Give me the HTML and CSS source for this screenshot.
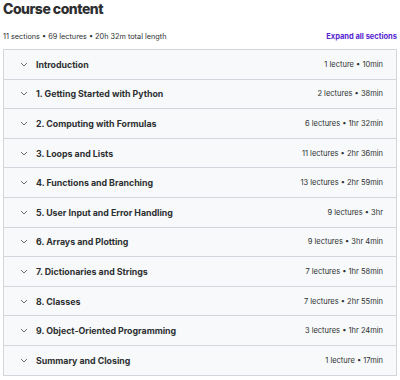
FILE: index.html
```html
<!DOCTYPE html>
<html lang="en">
<head>
    <meta charset="UTF-8">
    <title>Course content</title>
    <meta name="viewport" content="width=device-width, initial-scale=1.0">
    <link rel="stylesheet" href="styles.css">
</head>
<body>
    <h2 class="title">Course content</h2>

    <div class="summary">
        <span>11 sections • 69 lectures • 20h 32m total length</span>
        <button class="expand">Expand all sections</button>
    </div>

    <div class="sections">
        <div class="section">
            <span class="chevron"><svg width="8" height="5" viewBox="0 0 8 5"><path d="M1 1l3 3 3-3" fill="none" stroke="#6a6f73" stroke-width="1"/></svg></span>
            <span class="name">Introduction</span>
            <span class="meta">1 lecture • 10min</span>
        </div>
        <div class="section">
            <span class="chevron"><svg width="8" height="5" viewBox="0 0 8 5"><path d="M1 1l3 3 3-3" fill="none" stroke="#6a6f73" stroke-width="1"/></svg></span>
            <span class="name">1. Getting Started with Python</span>
            <span class="meta">2 lectures • 38min</span>
        </div>
        <div class="section">
            <span class="chevron"><svg width="8" height="5" viewBox="0 0 8 5"><path d="M1 1l3 3 3-3" fill="none" stroke="#6a6f73" stroke-width="1"/></svg></span>
            <span class="name">2. Computing with Formulas</span>
            <span class="meta">6 lectures • 1hr 32min</span>
        </div>
        <div class="section">
            <span class="chevron"><svg width="8" height="5" viewBox="0 0 8 5"><path d="M1 1l3 3 3-3" fill="none" stroke="#6a6f73" stroke-width="1"/></svg></span>
            <span class="name">3. Loops and Lists</span>
            <span class="meta">11 lectures • 2hr 36min</span>
        </div>
        <div class="section">
            <span class="chevron"><svg width="8" height="5" viewBox="0 0 8 5"><path d="M1 1l3 3 3-3" fill="none" stroke="#6a6f73" stroke-width="1"/></svg></span>
            <span class="name">4. Functions and Branching</span>
            <span class="meta">13 lectures • 2hr 59min</span>
        </div>
        <div class="section">
            <span class="chevron"><svg width="8" height="5" viewBox="0 0 8 5"><path d="M1 1l3 3 3-3" fill="none" stroke="#6a6f73" stroke-width="1"/></svg></span>
            <span class="name">5. User Input and Error Handling</span>
            <span class="meta">9 lectures • 3hr</span>
        </div>
        <div class="section">
            <span class="chevron"><svg width="8" height="5" viewBox="0 0 8 5"><path d="M1 1l3 3 3-3" fill="none" stroke="#6a6f73" stroke-width="1"/></svg></span>
            <span class="name">6. Arrays and Plotting</span>
            <span class="meta">9 lectures • 3hr 4min</span>
        </div>
        <div class="section">
            <span class="chevron"><svg width="8" height="5" viewBox="0 0 8 5"><path d="M1 1l3 3 3-3" fill="none" stroke="#6a6f73" stroke-width="1"/></svg></span>
            <span class="name">7. Dictionaries and Strings</span>
            <span class="meta">7 lectures • 1hr 58min</span>
        </div>
        <div class="section">
            <span class="chevron"><svg width="8" height="5" viewBox="0 0 8 5"><path d="M1 1l3 3 3-3" fill="none" stroke="#6a6f73" stroke-width="1"/></svg></span>
            <span class="name">8. Classes</span>
            <span class="meta">7 lectures • 2hr 55min</span>
        </div>
        <div class="section">
            <span class="chevron"><svg width="8" height="5" viewBox="0 0 8 5"><path d="M1 1l3 3 3-3" fill="none" stroke="#6a6f73" stroke-width="1"/></svg></span>
            <span class="name">9. Object-Oriented Programming</span>
            <span class="meta">3 lectures • 1hr 24min</span>
        </div>
        <div class="section">
            <span class="chevron"><svg width="8" height="5" viewBox="0 0 8 5"><path d="M1 1l3 3 3-3" fill="none" stroke="#6a6f73" stroke-width="1"/></svg></span>
            <span class="name">Summary and Closing</span>
            <span class="meta">1 lecture • 17min</span>
        </div>
    </div>
</body>
</html>
```

FILE: styles.css
```css
body {
    margin: 0;
    padding: 0 3px;
    font-family: Inter, "Noto Sans", sans-serif;
    color: #2d2f31;
    background: #ffffff;
}
.title {
    margin: 0;
    font-size: 14px;
    font-weight: 800;
    letter-spacing: -0.5px;
    line-height: 17px;
}
.summary {
    display: flex;
    justify-content: space-between;
    align-items: center;
    margin-top: 12px;
    height: 14px;
    font-size: 7.3px;
}
.expand {
    border: none;
    background: none;
    padding: 0;
    font-family: inherit;
    font-size: 7.5px;
    font-weight: 700;
    color: #5624d0;
}
.sections {
    margin-top: 6px;
    border: 1px solid #d1d7dc;
}
.section {
    display: flex;
    align-items: center;
    height: 28.6px;
    padding: 0 13px 0 16px;
    background: #f7f9fa;
    border-top: 1px solid #d1d7dc;
}
.section:first-child {
    border-top: none;
}
.chevron {
    display: flex;
    width: 16px;
}
.name {
    flex: 1;
    font-size: 8.8px;
    font-weight: 700;
}
.meta {
    font-size: 7.5px;
}
```
